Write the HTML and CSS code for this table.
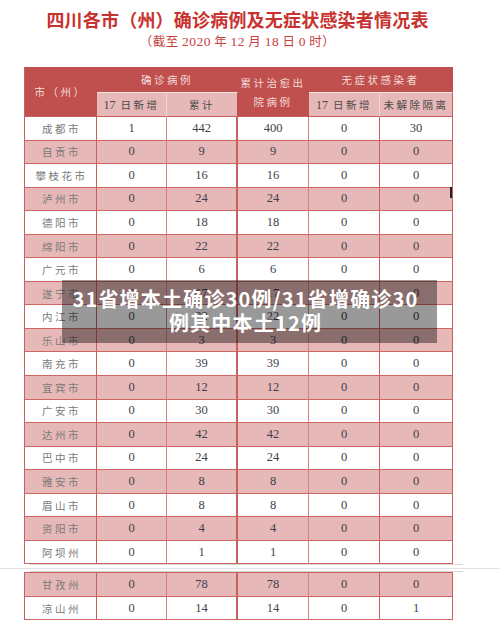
FILE: index.html
```html
<!DOCTYPE html>
<html lang="zh-CN">
<head>
<meta charset="utf-8">
<title>四川各市（州）确诊病例及无症状感染者情况表</title>
<link rel="stylesheet" href="styles.css">
</head>
<body>
<div class="page">
  <h1 class="title">四川各市（州）确诊病例及无症状感染者情况表</h1>
  <p class="subtitle">（截至 <span class="num">2020</span> 年 <span class="num">12</span> 月 <span class="num">18</span> 日 <span class="num">0</span> 时）</p>

  <div class="sheet">
    <table class="t">
      <colgroup>
        <col class="c1"><col class="c2"><col class="c3"><col class="c4"><col class="c5"><col class="c6">
      </colgroup>
      <thead>
        <tr class="h1">
          <th rowspan="2" class="hcity">市（州）</th>
          <th colspan="2">确诊病例</th>
          <th rowspan="2" class="hcure">累计治愈出<br>院病例</th>
          <th colspan="2">无症状感染者</th>
        </tr>
        <tr class="h2">
          <th><span class="num tight">17</span> 日新增</th>
          <th>累计</th>
          <th><span class="num tight">17</span> 日新增</th>
          <th>未解除隔离</th>
        </tr>
      </thead>
      <tbody>
        <tr><td class="city">成都市</td><td>1</td><td>442</td><td>400</td><td>0</td><td>30</td></tr>
        <tr class="pk"><td class="city">自贡市</td><td>0</td><td>9</td><td>9</td><td>0</td><td>0</td></tr>
        <tr><td class="city">攀枝花市</td><td>0</td><td>16</td><td>16</td><td>0</td><td>0</td></tr>
        <tr class="pk"><td class="city">泸州市</td><td>0</td><td>24</td><td>24</td><td>0</td><td>0</td></tr>
        <tr><td class="city">德阳市</td><td>0</td><td>18</td><td>18</td><td>0</td><td>0</td></tr>
        <tr class="pk"><td class="city">绵阳市</td><td>0</td><td>22</td><td>22</td><td>0</td><td>0</td></tr>
        <tr><td class="city">广元市</td><td>0</td><td>6</td><td>6</td><td>0</td><td>0</td></tr>
        <tr class="pk"><td class="city">遂宁市</td><td>0</td><td>17</td><td>17</td><td>0</td><td>0</td></tr>
        <tr><td class="city">内江市</td><td>0</td><td>22</td><td>22</td><td>0</td><td>0</td></tr>
        <tr class="pk"><td class="city">乐山市</td><td>0</td><td>3</td><td>3</td><td>0</td><td>0</td></tr>
        <tr><td class="city">南充市</td><td>0</td><td>39</td><td>39</td><td>0</td><td>0</td></tr>
        <tr class="pk"><td class="city">宜宾市</td><td>0</td><td>12</td><td>12</td><td>0</td><td>0</td></tr>
        <tr><td class="city">广安市</td><td>0</td><td>30</td><td>30</td><td>0</td><td>0</td></tr>
        <tr class="pk"><td class="city">达州市</td><td>0</td><td>42</td><td>42</td><td>0</td><td>0</td></tr>
        <tr><td class="city">巴中市</td><td>0</td><td>24</td><td>24</td><td>0</td><td>0</td></tr>
        <tr class="pk"><td class="city">雅安市</td><td>0</td><td>8</td><td>8</td><td>0</td><td>0</td></tr>
        <tr><td class="city">眉山市</td><td>0</td><td>8</td><td>8</td><td>0</td><td>0</td></tr>
        <tr class="pk"><td class="city">资阳市</td><td>0</td><td>4</td><td>4</td><td>0</td><td>0</td></tr>
        <tr><td class="city">阿坝州</td><td>0</td><td>1</td><td>1</td><td>0</td><td>0</td></tr>
      </tbody>
    </table>

    <div class="pagebreak"></div>

    <table class="t t2">
      <colgroup>
        <col class="c1"><col class="c2"><col class="c3"><col class="c4"><col class="c5"><col class="c6">
      </colgroup>
      <tbody>
        <tr class="pk"><td class="city">甘孜州</td><td>0</td><td>78</td><td>78</td><td>0</td><td>0</td></tr>
        <tr><td class="city">凉山州</td><td>0</td><td>14</td><td>14</td><td>0</td><td>1</td></tr>
      </tbody>
    </table>

    <span class="mark"></span>
  </div>

  <div class="caption">31省增本土确诊30例/31省增确诊30<br>例其中本土12例</div>
</div>
</body>
</html>
```

FILE: styles.css
```css
* { box-sizing: border-box; }

html, body {
  margin: 0;
  padding: 0;
  background: #ffffff;
}

body {
  width: 500px;
  height: 623px;
  overflow: hidden;
  font-family: "Noto Sans CJK SC", "Noto Sans", sans-serif;
}

.page {
  position: relative;
  width: 500px;
  height: 623px;
}

.title {
  margin: 0;
  padding-top: 8px;
  width: 475px;
  text-align: center;
  font-size: 18px;
  line-height: 22px;
  font-weight: 700;
  color: #c8322f;
  letter-spacing: 0.2px;
}

.subtitle {
  margin: 0;
  padding-top: 1px;
  width: 475px;
  text-align: center;
  font-size: 12.5px;
  line-height: 20px;
  color: #c8413d;
  letter-spacing: 0.5px;
}

.num {
  font-family: "Liberation Serif", "DejaVu Serif", serif;
  font-size: 1.08em;
}

.num.tight {
  letter-spacing: 0;
  font-size: 1.15em;
}

.sheet {
  position: relative;
  margin-top: 15px;
  margin-left: 24px;
  width: 428px;
}

.t {
  border-collapse: separate;
  border-spacing: 0;
  table-layout: fixed;
  width: 428px;
  border-left: 1px solid #c9605d;
}

.t2 {
  border-top: 1px solid #c9605d;
}

.c1 { width: 72px; }
.c2 { width: 70px; }
.c3 { width: 71px; }
.c4 { width: 71px; }
.c5 { width: 71px; }
.c6 { width: 73px; }

th {
  font-weight: 400;
  padding: 0;
  text-align: center;
  font-size: 10.5px;
  letter-spacing: 2.5px;
}

.h1 th {
  height: 25px;
  background: #c0504d;
  color: #f4dcdb;
  border-right: 1px solid #c0504d;
}

.h1 th.hcity,
.h1 th.hcure {
  line-height: 19px;
  vertical-align: middle;
}

.h1 th.hcure {
  padding-top: 1px;
}

.h2 th {
  height: 25px;
  background: #e6b8b7;
  color: #4a4a4a;
  border-top: 1px solid #f6e4e3;
  border-right: 1px solid #f0d4d3;
  border-bottom: 1px solid #c9605d;
}

.h2 th:nth-child(2) {
  border-right: 1px solid #c0504d;
}

.h2 th:last-child {
  border-right: 1px solid #c9605d;
}

.h1 th.hcity {
  border-bottom: 1px solid #c9605d;
}

.h1 th.hcure {
  border-bottom: 1px solid #c9605d;
}

td {
  height: 23.55px;
  padding: 0;
  text-align: center;
  font-family: "Liberation Serif", "DejaVu Serif", serif;
  font-size: 12.5px;
  color: #3e3f4c;
  border-right: 1px solid #d7817e;
  border-bottom: 1px solid #cd6662;
}

td:nth-child(1),
td:nth-child(3),
td:nth-child(5),
td:nth-child(6) {
  border-right-color: #c9605d;
}

td:nth-child(3) {
  border-right-width: 2px;
}

td.city {
  font-family: "Noto Sans CJK SC", "Noto Sans", sans-serif;
  font-size: 10.5px;
  letter-spacing: 2.5px;
  color: #7a7a7a;
  padding-left: 2px;
}

tr.pk td {
  background: #e6b8b7;
}

.pagebreak {
  position: relative;
  height: 8px;
  margin: 0 -11px 0 6px;
  border-top: 1px solid #d8d8d8;
  border-bottom: 1px solid #d8d8d8;
}

.pagebreak::before {
  content: "";
  position: absolute;
  left: -30px;
  right: -60px;
  top: 3px;
  border-top: 1px solid #e2e2e2;
}

.mark {
  position: absolute;
  left: 426px;
  top: 120px;
  width: 2px;
  height: 11px;
  background: #222222;
}

.caption {
  position: absolute;
  left: 62px;
  top: 280px;
  width: 375px;
  padding: 7px 8px 8px 0;
  background: rgba(0, 0, 0, 0.4);
  color: #ffffff;
  text-align: center;
  font-family: "Noto Sans CJK SC", "Noto Sans", sans-serif;
  font-weight: 700;
  font-size: 20px;
  line-height: 24px;
  letter-spacing: 1.2px;
}
```
